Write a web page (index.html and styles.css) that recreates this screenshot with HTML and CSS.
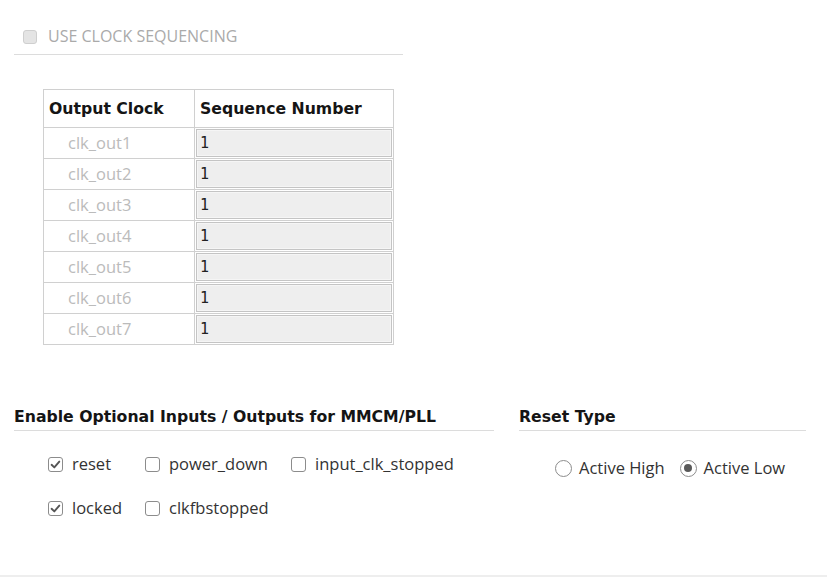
FILE: index.html
```html
<!DOCTYPE html>
<html>
<head>
<meta charset="utf-8">
<link rel="stylesheet" href="styles.css">
</head>
<body>
<div class="page">
  <div class="seq-head">
    <label class="seq-label"><span class="box box-disabled"></span>USE CLOCK SEQUENCING</label>
  </div>
  <table class="seq-table">
    <thead>
      <tr><th class="c1">Output Clock</th><th class="c2">Sequence Number</th></tr>
    </thead>
    <tbody>
      <tr><td class="name">clk_out1</td><td class="val"><div class="inp">1</div></td></tr>
      <tr><td class="name">clk_out2</td><td class="val"><div class="inp">1</div></td></tr>
      <tr><td class="name">clk_out3</td><td class="val"><div class="inp">1</div></td></tr>
      <tr><td class="name">clk_out4</td><td class="val"><div class="inp">1</div></td></tr>
      <tr><td class="name">clk_out5</td><td class="val"><div class="inp">1</div></td></tr>
      <tr><td class="name">clk_out6</td><td class="val"><div class="inp">1</div></td></tr>
      <tr><td class="name">clk_out7</td><td class="val"><div class="inp">1</div></td></tr>
    </tbody>
  </table>
  <div class="opts">
    <div class="panel panel-io">
      <div class="panel-title">Enable Optional Inputs / Outputs for MMCM/PLL</div>
      <div class="io-grid">
        <label class="opt"><span class="box checked"><svg viewBox="0 0 15 15" width="15" height="15"><path d="M3.6 7.8 L6.3 10.4 L11.3 4.6" fill="none" stroke="#555" stroke-width="1.9" stroke-linecap="round" stroke-linejoin="round"/></svg></span>reset</label>
        <label class="opt"><span class="box"></span>power_down</label>
        <label class="opt"><span class="box"></span>input_clk_stopped</label>
        <label class="opt"><span class="box checked"><svg viewBox="0 0 15 15" width="15" height="15"><path d="M3.6 7.8 L6.3 10.4 L11.3 4.6" fill="none" stroke="#555" stroke-width="1.9" stroke-linecap="round" stroke-linejoin="round"/></svg></span>locked</label>
        <label class="opt"><span class="box"></span>clkfbstopped</label>
      </div>
    </div>
    <div class="panel panel-reset">
      <div class="panel-title">Reset Type</div>
      <div class="radios">
        <label class="radio"><span class="circle"></span>Active High</label>
        <label class="radio"><span class="circle on"></span>Active Low</label>
      </div>
    </div>
  </div>
  <div class="footer-line"></div>
</div>
</body>
</html>
```
FILE: styles.css
```css
html, body {
  margin: 0;
  padding: 0;
  background: #fff;
}
.page {
  width: 827px;
  height: 577px;
  position: relative;
  font-family: "Open Sans", "Liberation Sans", sans-serif;
  font-size: 16.5px;
  color: #333;
  display: flex;
  flex-direction: column;
}
.seq-head {
  margin-left: 14px;
  width: 389px;
  padding-top: 29px;
  padding-bottom: 10px;
  border-bottom: 1px solid #dcdcdc;
}
.seq-label {
  display: flex;
  align-items: center;
  padding-left: 9px;
  height: 15px;
  color: #aaa;
  font-size: 16px;
  line-height: 15px;
}
.box {
  box-sizing: border-box;
  width: 15px;
  height: 15px;
  border: 1px solid #8c8c8c;
  border-radius: 3px;
  background: #fff;
  margin-right: 9px;
  flex: none;
  position: relative;
  display: inline-block;
}
.box svg {
  position: absolute;
  left: -1px;
  top: -1px;
}
.box-disabled {
  background: #e4e4e4;
  border-color: #cfcfcf;
  width: 14px;
  height: 14px;
  margin-right: 11px;
}
.seq-table {
  margin-top: 34px;
  margin-left: 43px;
  border-collapse: collapse;
  width: 351px;
  border: 1px solid #d0d0d0;
}
.seq-table th, .seq-table td {
  border: 1px solid #d0d0d0;
  padding: 0;
}
.seq-table th {
  font-family: "DejaVu Sans", sans-serif;
  font-weight: bold;
  font-size: 15.7px;
  color: #151515;
  text-align: left;
  height: 37px;
  padding-left: 5px;
}
.seq-table th.c1 {
  width: 145px;
}
.seq-table td.name {
  color: #bbb;
  padding-left: 24px;
  line-height: 28px;
}
.seq-table td.val {
  padding: 1px;
}
.inp {
  box-sizing: border-box;
  height: 28px;
  border: 1px solid #c4c4c4;
  background: #eeeeee;
  box-shadow: inset 0 0 0 1px #f5f5f5;
  font-family: "DejaVu Sans Mono", monospace;
  font-size: 15px;
  line-height: 26px;
  padding-left: 3px;
  color: #222;
}
.opts {
  display: flex;
  margin-top: 63px;
  margin-left: 14px;
  gap: 25px;
}
.panel-io {
  width: 480px;
}
.panel-reset {
  width: 287px;
}
.panel-title {
  font-family: "DejaVu Sans", sans-serif;
  font-weight: bold;
  font-size: 15.7px;
  color: #151515;
  line-height: 18px;
  padding-bottom: 4px;
  border-bottom: 1px solid #dcdcdc;
}
.io-grid {
  display: grid;
  grid-template-columns: 97px 146px auto;
  row-gap: 24px;
  padding-left: 34px;
  margin-top: 23px;
}
.opt, .radio {
  display: flex;
  align-items: center;
  height: 20px;
  line-height: 20px;
  color: #333;
}
.radios {
  display: flex;
  padding-left: 36px;
  margin-top: 27px;
}
.radio {
  margin-right: 15px;
}
.circle {
  box-sizing: border-box;
  width: 17px;
  height: 17px;
  border: 1px solid #8c8c8c;
  border-radius: 50%;
  background: #fff;
  margin-right: 7px;
  position: relative;
  flex: none;
}
.circle.on::after {
  content: "";
  position: absolute;
  left: 3.5px;
  top: 3.5px;
  width: 8px;
  height: 8px;
  border-radius: 50%;
  background: #595959;
}
.footer-line {
  position: absolute;
  left: 0;
  right: 0;
  bottom: 0;
  height: 2px;
  background: #eeeeee;
}
```
